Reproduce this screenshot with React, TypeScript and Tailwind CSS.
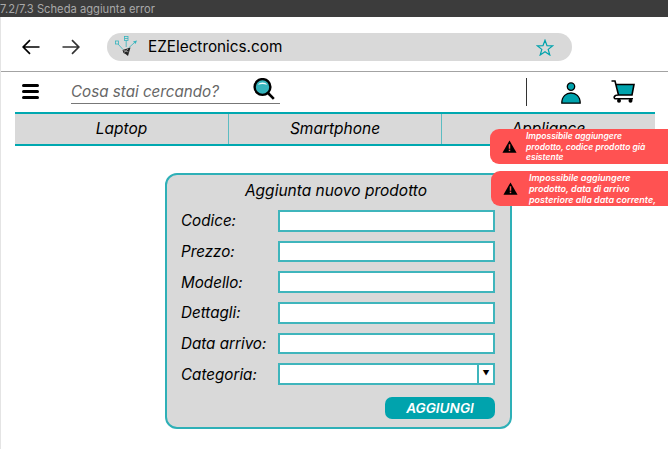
const fields = ["Codice:", "Prezzo:", "Modello:", "Dettagli:", "Data arrivo:"]
const tabs = ["Laptop", "Smartphone", "Appliance"]

function WarnIcon({ className }: { className: string }) {
  return (
    <svg viewBox="0 0 16 14" className={className}>
      <path d="M8 0.5 L15.6 13.6 H0.4 Z" fill="#000" />
      <rect x="7.2" y="4.6" width="1.6" height="4.8" fill="#ff5252" />
      <rect x="7.2" y="10.4" width="1.6" height="1.6" fill="#ff5252" />
    </svg>
  )
}

function Arrow({ back, color }: { back?: boolean; color: string }) {
  return (
    <svg viewBox="0 0 18 16" className="w-[18px] h-4 shrink-0">
      <path
        d={back ? "M17.5 8 H1.5 M8 1.2 L1.2 8 L8 14.8" : "M0.5 8 H16.5 M10 1.2 L16.8 8 L10 14.8"}
        fill="none"
        stroke={color}
        strokeWidth="1.7"
      />
    </svg>
  )
}

function StarIcon() {
  return (
    <svg viewBox="0 0 18 17" className="ml-auto w-[18px] h-[17px] shrink-0">
      <path
        d="M9 1.2 L11 6.6 L16.8 6.8 L12.2 10.4 L13.8 16 L9 12.8 L4.2 16 L5.8 10.4 L1.2 6.8 L7 6.6 Z"
        fill="none"
        stroke="#00a3ad"
        strokeWidth="1.2"
      />
    </svg>
  )
}

function Logo() {
  return (
    <svg viewBox="0 0 28 24" className="w-7 h-6 shrink-0">
      <g stroke="#35b4bd" strokeWidth="0.8" fill="none">
        <rect x="2.5" y="6" width="3" height="3" />
        <rect x="11.5" y="1.5" width="3.5" height="4" />
        <path d="M11.5 3.5h3.5" />
        <path d="M5 9 L10 14.5 M13.2 5.5 V12 M21 8 L15.5 13" />
      </g>
      <path d="M20 6.5 L24 5.5 L22.5 9 Z" fill="#35b4bd" />
      <path d="M9.5 15 L17.5 12.5 L15 21 L12.5 19 L10.5 18 Z" fill="#222" />
      <path d="M10.5 15.5 L15.5 17 M11 17.5 L15 14" stroke="#d9d9d9" strokeWidth="0.6" />
    </svg>
  )
}

function SearchIcon() {
  return (
    <svg viewBox="0 0 22 22" className="w-[22px] h-[22px] shrink-0">
      <path d="M15 15 L20.8 20.8" stroke="#000" strokeWidth="2.6" />
      <circle cx="9.5" cy="9" r="7.9" fill="#35b4bd" stroke="#000" strokeWidth="2.4" />
      <path d="M5 6.8 C6.5 3.8 12.5 3.6 14 6.8 C11 5.8 8 5.8 5 6.8 Z" fill="#f2fbfb" />
    </svg>
  )
}

function UserIcon() {
  return (
    <svg viewBox="0 0 20 22" className="w-5 h-[22px] shrink-0">
      <circle cx="10" cy="4.6" r="3.7" fill="#00a3ad" stroke="#000" strokeWidth="1.3" />
      <path d="M0.8 21.2 C0.8 14 5.5 11 10 11 C14.5 11 19.2 14 19.2 21.2 Z" fill="#00a3ad" stroke="#000" strokeWidth="1.3" />
    </svg>
  )
}

function CartIcon() {
  return (
    <svg viewBox="0 0 24 23" className="w-6 h-[23px] shrink-0">
      <path d="M5.5 4.5 H23 L21 15 H7.5 Z" fill="#00a3ad" />
      <path d="M0.5 1 H4 L7.5 15 H21 L23 4.5 H5.5 M7.5 15 C2.5 15 2 18.8 5 18.8 H22" fill="none" stroke="#000" strokeWidth="1.6" />
      <circle cx="8" cy="20.8" r="2" fill="#000" />
      <circle cx="19.5" cy="20.8" r="2" fill="#000" />
    </svg>
  )
}

export default function App() {
  return (
    <div className="relative w-[668px] h-[449px] overflow-hidden bg-white font-['Inter',sans-serif]">
      {/* Figma title bar */}
      <div className="h-[17px] bg-[#3c3c3c] text-[11.2px] leading-[18px] text-[#a8a8a8] whitespace-nowrap">
        7.2/7.3 Scheda aggiunta error
      </div>

      <div className="h-[432px] border-l border-[#e4e4e4]">
        {/* Browser bar */}
        <div className="h-[55px] flex items-center border-b border-[#a3a3a3] pl-[21px] pt-[6px]">
          <div className="mb-[1px]"><Arrow back color="#000" /></div>
          <div className="ml-[22px] mb-[1px]"><Arrow color="#333" /></div>
          <div className="ml-[27px] w-[465px] h-[28px] rounded-full bg-[#d9d9d9] flex items-center pl-[6px] pr-[18px]">
            <Logo />
            <span className="ml-[7px] text-[15.3px] text-black">EZElectronics.com</span>
            <StarIcon />
          </div>
        </div>

        {/* Search row */}
        <div className="h-[40px] flex items-start pl-[21px]">
          <div className="mt-[12px] flex flex-col gap-[3px]">
            <span className="block w-[17px] h-[3px] rounded-full bg-black" />
            <span className="block w-[17px] h-[3px] rounded-full bg-black" />
            <span className="block w-[17px] h-[3px] rounded-full bg-black" />
          </div>
          <div className="ml-[32px] w-[209px] h-[32px] flex items-start justify-between border-b border-[#777] pt-[6px]">
            <span className="mt-[4px] text-[15.2px] leading-[20px] italic text-[#666]">Cosa stai cercando?</span>
            <div className="mr-[5px]"><SearchIcon /></div>
          </div>
          <div className="mt-[6px] ml-[246px] w-px h-[28px] bg-[#333]" />
          <div className="mt-[10px] ml-[34px]"><UserIcon /></div>
          <div className="mt-[8px] ml-[30px]"><CartIcon /></div>
        </div>

        {/* Category tabs */}
        <div className="ml-[14px] w-[640px] h-[34px] grid grid-cols-[213px_213px_214px] bg-[#d9d9d9] border-y-2 border-[#00a8b0]">
          {tabs.map((tab, i) => (
            <div
              key={tab}
              className={`flex items-center justify-center text-[15.5px] italic text-black ${i > 0 ? "border-l border-[#5cbcc2]" : ""}`}
            >
              {tab}
            </div>
          ))}
        </div>

        {/* Form */}
        <div className="ml-[164px] mt-[27px] w-[347px] h-[256px] rounded-[12px] border-2 border-[#2eb0b7] bg-[#d9d9d9] pl-[14px] pr-[15px] pt-[6px]">
          <h1 className="pr-[4px] text-center text-[15.5px] leading-[20px] italic font-normal text-black">Aggiunta nuovo prodotto</h1>
          <div className="mt-[9px] flex flex-col gap-[9px]">
            {fields.map((f) => (
              <div key={f} className="flex items-center h-[21.67px]">
                <label className="w-[97px] pt-[2px] text-[15.2px] italic text-black">{f}</label>
                <div className="w-[217px] h-[21.67px] bg-white border-2 border-[#3fb5bc]" />
              </div>
            ))}
            <div className="flex items-center h-[21.67px]">
              <label className="w-[97px] pt-[2px] text-[15.2px] italic text-black">Categoria:</label>
              <div className="w-[217px] h-[21.67px] bg-white border-2 border-[#3fb5bc] flex justify-end">
                <div className="w-[16px] border-l-2 border-[#3fb5bc] flex items-center justify-center text-[7px] text-black">▼</div>
              </div>
            </div>
          </div>
          <div className="mt-[12.5px] flex justify-end">
            <button className="w-[110px] h-[21.5px] rounded-[7px] bg-[#00a3ad] text-white text-[13.6px] leading-[20px] font-semibold italic">
              AGGIUNGI
            </button>
          </div>
        </div>
      </div>

      {/* Error toasts */}
      <div className="absolute left-[490px] top-[129px] w-[178px] h-[35px] rounded-l-[9px] bg-[#ff5252] flex items-center pl-[12px]">
        <WarnIcon className="w-[15px] h-[13px] shrink-0" />
        <p className="ml-[9px] w-[125px] pt-[1px] text-[8.5px] leading-[10.4px] font-semibold italic text-white">
          Impossibile aggiungere prodotto, codice prodotto già esistente
        </p>
      </div>
      <div className="absolute left-[491px] top-[171px] w-[177px] h-[35px] rounded-l-[9px] bg-[#ff5252] flex items-center pl-[12px] overflow-hidden">
        <WarnIcon className="w-[15px] h-[13px] shrink-0" />
        <p className="ml-[11px] text-[9px] leading-[11px] font-semibold italic text-white">
          Impossibile aggiungere prodotto, data di arrivo posteriore alla data corrente,
        </p>
      </div>
    </div>
  )
}
